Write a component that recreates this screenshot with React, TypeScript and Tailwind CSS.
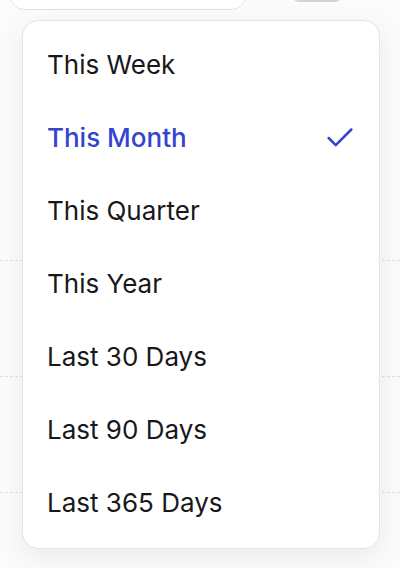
import { Check } from "lucide-react";

const ranges = [
  "This Week",
  "This Month",
  "This Quarter",
  "This Year",
  "Last 30 Days",
  "Last 90 Days",
  "Last 365 Days",
];

const selected = "This Month";

export default function App() {
  return (
    <div className="relative h-[568px] w-[400px] overflow-hidden bg-[#fbfbfb] font-['Inter',sans-serif]">
      {/* page behind the menu */}
      <div className="flex flex-col">
        <div className="mt-[-40px] flex items-end gap-[47px] pl-[10px]">
          <div className="h-[50px] w-[236px] rounded-[14px] border border-[#e4e4e7] bg-white" />
          <div className="mb-[8px] h-[12px] w-[48px] rounded-full bg-[#d4d4d8]" />
        </div>
        <div className="mt-[250px] flex flex-col gap-[115px]">
          <div className="border-t border-dashed border-[#e0e0e3]" />
          <div className="border-t border-dashed border-[#e0e0e3]" />
          <div className="border-t border-dashed border-[#e0e0e3]" />
        </div>
      </div>

      {/* dropdown */}
      <div className="absolute left-[22px] top-[20px] w-[358px] rounded-[16px] border border-[#e4e4e7] bg-white pt-[7px] pb-[9px] shadow-[0_8px_28px_rgba(0,0,0,0.07)]">
        {ranges.map((label) => {
          const active = label === selected;
          return (
            <div
              key={label}
              className={`flex h-[73px] items-center justify-between pl-[24px] pr-[22px] text-[26px] ${
                active ? "font-medium text-[#3445cc]" : "text-[#18181b]"
              }`}
            >
              <span>{label}</span>
              {active && <Check className="h-[34px] w-[34px]" strokeWidth={1.8} />}
            </div>
          );
        })}
      </div>
    </div>
  );
}
